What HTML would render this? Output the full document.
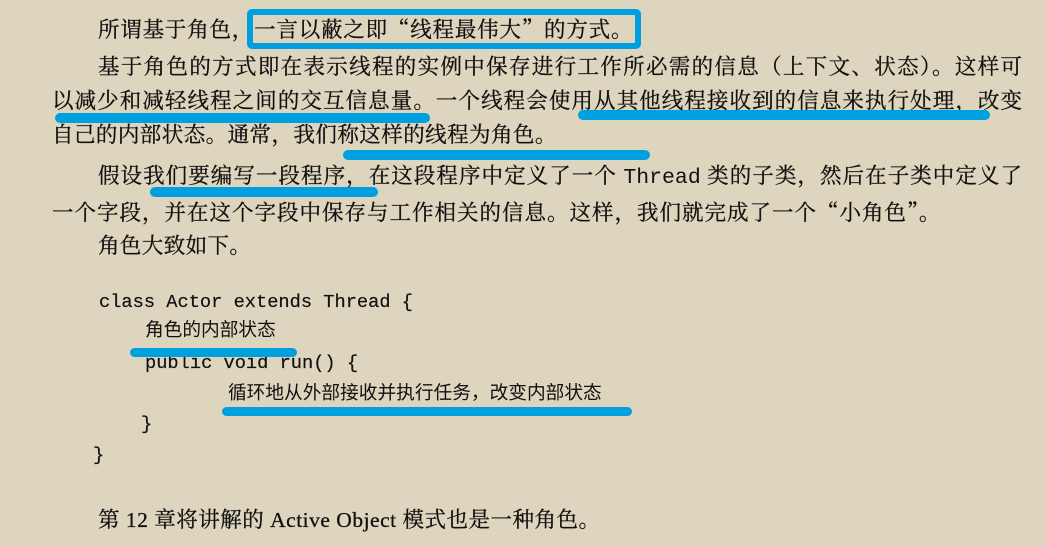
<!DOCTYPE html>
<html><head><meta charset="utf-8"><style>
html,body{margin:0;padding:0}
body{width:1046px;height:546px;background:#ddd5bd;position:relative;overflow:hidden;color:#111;font-family:"Liberation Serif","Noto Serif CJK SC",serif}
.l{position:absolute;font-size:21.5px;line-height:24px;white-space:nowrap;-webkit-text-stroke:0.3px #111}
.j{text-align:justify;text-align-last:justify;white-space:normal}
.m{font-family:"Liberation Mono",monospace;-webkit-text-stroke:0}
.q{font-family:"Noto Serif CJK SC",serif}
.c{position:absolute;font-family:"Liberation Mono",monospace;font-size:18.7px;line-height:22px;white-space:pre;-webkit-text-stroke:0.2px #111}
.cz{position:absolute;font-family:"Liberation Sans","Noto Sans CJK SC",sans-serif;font-size:18.7px;line-height:22px;white-space:nowrap}
.u{position:absolute;background:#00a0e0;border-radius:6px;height:10px}
</style></head><body>
<div class="l" style="left:98px;top:17px;letter-spacing:0.8px">所谓基于角色，一言以蔽之即<span class="q">“</span>线程最伟大<span class="q">”</span>的方式。</div>
<div style="position:absolute;left:247px;top:9px;width:382px;height:28px;border:6px solid #00a0e0;border-radius:5px"></div>
<div class="l j" style="left:98px;top:55px;width:924px">基于角色的方式即在表示线程的实例中保存进行工作所必需的信息（上下文、状态）。这样可</div>
<div class="l j" style="left:52px;top:89px;width:970px">以减少和减轻线程之间的交互信息量。一个线程会使用从其他线程接收到的信息来执行处理，改变</div>
<div class="l" style="left:52px;top:123px;letter-spacing:0.45px">自己的内部状态。通常，我们称这样的线程为角色。</div>
<div class="l j" style="left:98px;top:164px;width:924px">假设我们要编写一段程序，在这段程序中定义了一个 <span class="m">Thread</span> 类的子类，然后在子类中定义了</div>
<div class="l" style="left:52px;top:200px;letter-spacing:1px">一个字段，并在这个字段中保存与工作相关的信息。这样，我们就完成了一个<span class="q">“</span>小角色<span class="q">”</span>。</div>
<div class="l" style="left:98px;top:234px;letter-spacing:0.4px">角色大致如下。</div>
<div class="c" style="left:99px;top:291px">class Actor extends Thread {</div>
<div class="cz" style="left:145px;top:319px">角色的内部状态</div>
<div class="c" style="left:145px;top:352px">public void run() {</div>
<div class="cz" style="left:228px;top:382px">循环地从外部接收并执行任务，改变内部状态</div>
<div class="c" style="left:141px;top:413px">}</div>
<div class="c" style="left:93px;top:444px">}</div>
<div class="l" style="left:98px;top:508px;letter-spacing:0.5px">第 12 章将讲解的 Active Object 模式也是一种角色。</div>
<div class="u" style="left:55px;top:113px;width:375px"></div>
<div class="u" style="left:578px;top:110px;width:412px"></div>
<div class="u" style="left:343px;top:150px;width:307px"></div>
<div class="u" style="left:150px;top:187px;width:228px"></div>
<div class="u" style="left:130px;top:348px;width:167px;height:9px"></div>
<div class="u" style="left:222px;top:407px;width:410px;height:9px"></div>
</body></html>
